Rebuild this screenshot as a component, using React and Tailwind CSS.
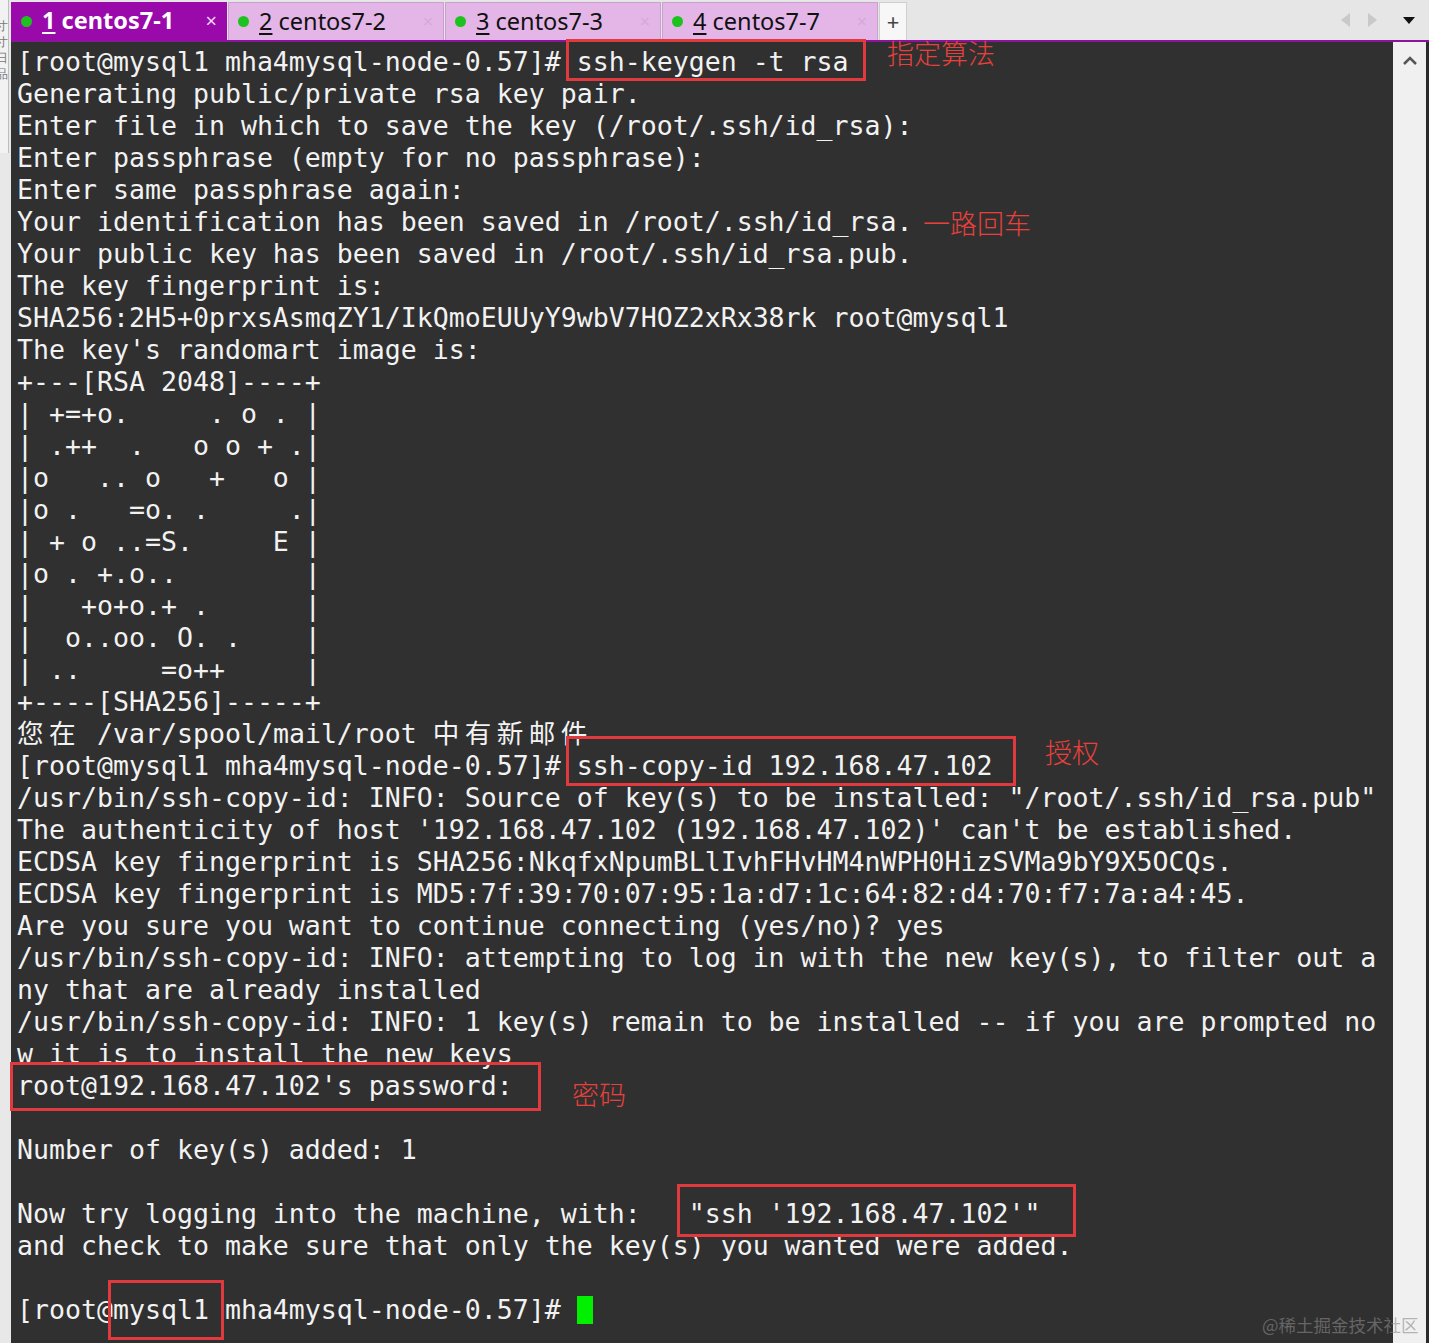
import React from "react";

const lines = [
  "[root@mysql1 mha4mysql-node-0.57]# ssh-keygen -t rsa",
  "Generating public/private rsa key pair.",
  "Enter file in which to save the key (/root/.ssh/id_rsa):",
  "Enter passphrase (empty for no passphrase):",
  "Enter same passphrase again:",
  "Your identification has been saved in /root/.ssh/id_rsa.",
  "Your public key has been saved in /root/.ssh/id_rsa.pub.",
  "The key fingerprint is:",
  "SHA256:2H5+0prxsAsmqZY1/IkQmoEUUyY9wbV7HOZ2xRx38rk root@mysql1",
  "The key's randomart image is:",
  "+---[RSA 2048]----+",
  "| +=+o.     . o . |",
  "| .++  .   o o + .|",
  "|o   .. o   +   o |",
  "|o .   =o. .     .|",
  "| + o ..=S.     E |",
  "|o . +.o..        |",
  "|   +o+o.+ .      |",
  "|  o..oo. O. .    |",
  "| ..     =o++     |",
  "+----[SHA256]-----+",
  "您在 /var/spool/mail/root 中有新邮件",
  "[root@mysql1 mha4mysql-node-0.57]# ssh-copy-id 192.168.47.102",
  '/usr/bin/ssh-copy-id: INFO: Source of key(s) to be installed: "/root/.ssh/id_rsa.pub"',
  "The authenticity of host '192.168.47.102 (192.168.47.102)' can't be established.",
  "ECDSA key fingerprint is SHA256:NkqfxNpumBLlIvhFHvHM4nWPH0HizSVMa9bY9X5OCQs.",
  "ECDSA key fingerprint is MD5:7f:39:70:07:95:1a:d7:1c:64:82:d4:70:f7:7a:a4:45.",
  "Are you sure you want to continue connecting (yes/no)? yes",
  "/usr/bin/ssh-copy-id: INFO: attempting to log in with the new key(s), to filter out a",
  "ny that are already installed",
  "/usr/bin/ssh-copy-id: INFO: 1 key(s) remain to be installed -- if you are prompted no",
  "w it is to install the new keys",
  "root@192.168.47.102's password:",
  "",
  "Number of key(s) added: 1",
  "",
  "Now try logging into the machine, with:   \"ssh '192.168.47.102'\"",
  "and check to make sure that only the key(s) you wanted were added.",
  "",
];

// wide chars take two terminal cells
function renderText(str) {
  const out = [];
  let buf = "";
  [...str].forEach((ch, i) => {
    if (ch.charCodeAt(0) > 0x2e80) {
      if (buf) out.push(buf);
      buf = "";
      out.push(
        <span key={i} className="inline-block w-[32px] text-left">
          {ch}
        </span>
      );
    } else {
      buf += ch;
    }
  });
  if (buf) out.push(buf);
  return out;
}

function Tab({ num, name, active }) {
  return (
    <div
      className={
        active
          ? "w-[216px] h-[38px] mt-[2px] flex items-center bg-[#9a09aa] text-white font-bold pl-[10px] pr-[10px]"
          : "w-[216px] h-[38px] mt-[2px] flex items-center bg-[#e3b6e7] text-[#111] border-x border-t border-[#caa0ce] pl-[9px] pr-[10px]"
      }
    >
      <span className="w-[11px] h-[11px] rounded-full bg-[#1ec21e] mr-[10px]" />
      <span className="text-[23.5px] leading-none whitespace-nowrap">
        <span className="underline underline-offset-[3px] decoration-[1.5px]">{num}</span> {name}
      </span>
      <span
        className={
          active
            ? "ml-auto text-[20px] text-[#f0d8f2] font-normal"
            : "ml-auto text-[18px] text-[#d6a8da]"
        }
      >
        ×
      </span>
    </div>
  );
}

export default function App() {
  return (
    <div
      className="relative w-[1429px] h-[1343px] flex bg-[#e8e8e8] overflow-hidden"
      style={{ fontFamily: '"Noto Sans", "Open Sans", sans-serif' }}
    >
      {/* left strip */}
      <div className="w-[11px] flex flex-col">
        <div className="w-[9px] h-[153px] bg-[#f2f2f2] border-r border-[#bdbdbd] overflow-hidden text-[12px] leading-[16px] text-[#777]">
          <div className="-ml-[4px] pt-[2px]">
            <div>I</div>
            <div>寸</div>
            <div>寸</div>
            <div>日</div>
            <div>品</div>
          </div>
        </div>
      </div>

      <div className="flex-1 flex flex-col">
        {/* tab bar */}
        <div className="h-[40px] flex items-start bg-[#e6e6e6]">
          <Tab num="1" name="centos7-1" active />
          <div className="w-[1px]" />
          <Tab num="2" name="centos7-2" />
          <div className="w-[1px]" />
          <Tab num="3" name="centos7-3" />
          <div className="w-[1px]" />
          <Tab num="4" name="centos7-7" />
          <div className="w-[1px]" />
          <div className="w-[28px] h-[38px] mt-[2px] bg-[#f7f7f7] border border-b-0 border-[#cfcfcf] flex items-center justify-center text-[22px] text-[#444]">
            +
          </div>
          <div className="flex-1" />
          <div className="h-[40px] flex items-center gap-[16px] pr-[14px]">
            <svg width="10" height="14" viewBox="0 0 10 14">
              <path d="M9 0 L0 7 L9 14 Z" fill="#c9c9c9" />
            </svg>
            <svg width="10" height="14" viewBox="0 0 10 14">
              <path d="M1 0 L10 7 L1 14 Z" fill="#c9c9c9" />
            </svg>
            <svg width="12" height="7" viewBox="0 0 12 7" className="ml-[10px]">
              <path d="M0 0 L12 0 L6 7 Z" fill="#111" />
            </svg>
          </div>
        </div>
        <div className="h-[2px] bg-[#8d129c]" />

        <div className="flex flex-1">
          {/* terminal */}
          <div
            className="w-[1382px] bg-[#303030] pl-[6px] pt-[4px] text-[#f2f2f2] text-[26.576px] leading-[32px] whitespace-pre"
            style={{ fontFamily: '"DejaVu Sans Mono", "Noto Sans CJK SC", monospace' }}
          >
            {lines.map((l, i) => (
              <div key={i} className="h-[32px]">
                {renderText(l)}
              </div>
            ))}
            <div className="h-[32px] flex items-center">
              <span>[root@mysql1 mha4mysql-node-0.57]# </span>
              <span className="inline-block w-[16px] h-[28px] bg-[#00f000]" />
            </div>
          </div>
          {/* scrollbar */}
          <div className="w-[33px] bg-[#f0f0f0] flex justify-center pt-[14px]">
            <svg width="16" height="10" viewBox="0 0 16 10">
              <path d="M2 8 L8 2 L14 8" fill="none" stroke="#555" strokeWidth="2.5" />
            </svg>
          </div>
          <div className="w-[3px] bg-[#2a2a2a]" />
        </div>
      </div>

      {/* annotations */}
      <div className="absolute left-[566px] top-[39px] w-[300px] h-[42px] border-[3px] border-[#e03a3f]" />
      <div className="absolute left-[566px] top-[736px] w-[450px] h-[50px] border-[3px] border-[#e03a3f]" />
      <div className="absolute left-[10px] top-[1062px] w-[531px] h-[49px] border-[3px] border-[#e03a3f]" />
      <div className="absolute left-[677px] top-[1184px] w-[399px] h-[53px] border-[3px] border-[#e03a3f]" />
      <div className="absolute left-[108px] top-[1280px] w-[116px] h-[60px] border-[3px] border-[#e03a3f]" />

      <div
        className="absolute left-[887px] top-[36px] text-[27px] leading-[34px] text-[#e8403c] whitespace-nowrap"
        style={{ fontFamily: '"Noto Sans CJK SC", sans-serif', fontWeight: 300 }}
      >
        指定算法
      </div>
      <div
        className="absolute left-[923px] top-[206px] text-[27px] leading-[34px] text-[#e8403c] whitespace-nowrap"
        style={{ fontFamily: '"Noto Sans CJK SC", sans-serif', fontWeight: 300 }}
      >
        一路回车
      </div>
      <div
        className="absolute left-[1045px] top-[735px] text-[27px] leading-[34px] text-[#e8403c] whitespace-nowrap"
        style={{ fontFamily: '"Noto Sans CJK SC", sans-serif', fontWeight: 300 }}
      >
        授权
      </div>
      <div
        className="absolute left-[572px] top-[1077px] text-[27px] leading-[34px] text-[#e8403c] whitespace-nowrap"
        style={{ fontFamily: '"Noto Sans CJK SC", sans-serif', fontWeight: 300 }}
      >
        密码
      </div>

      <div
        className="absolute left-[1262px] top-[1313px] text-[17.5px] leading-[24px] text-[#8a8a8a]/60 whitespace-nowrap"
        style={{ fontFamily: '"Noto Sans CJK SC", sans-serif' }}
      >
        @稀土掘金技术社区
      </div>
    </div>
  );
}
